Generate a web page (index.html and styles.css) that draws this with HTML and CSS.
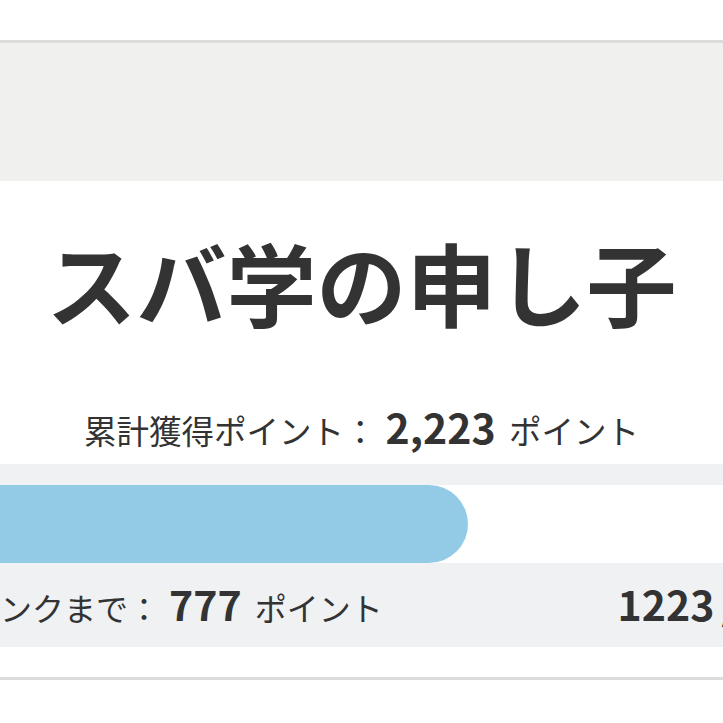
FILE: index.html
```html
<!DOCTYPE html>
<html lang="ja">
<head>
<meta charset="utf-8">
<link rel="stylesheet" href="styles.css">
</head>
<body>
<div class="top-space"></div>
<section class="panel">
  <div class="panel-head"></div>
  <div class="panel-body">
    <h1 class="rank-title">スバ学の申し子</h1>
    <p class="total">累計獲得ポイント：<span class="num">2,223</span> ポイント</p>
    <div class="progress-area">
      <div class="track">
        <div class="bar" style="width: 508px"></div>
      </div>
      <div class="progress-row">
        <p class="next">次のランクまで：<span class="num">777</span> ポイント</p>
        <p class="ratio"><span class="num">1223</span> / <span class="num">2000</span></p>
      </div>
    </div>
  </div>
</section>
</body>
</html>
```

FILE: styles.css
```css
html, body {
  margin: 0;
  padding: 0;
  background: #ffffff;
  overflow: hidden;
}
body {
  font-family: "Noto Sans CJK JP", "Noto Sans", sans-serif;
  color: #333333;
  width: 723px;
}
.top-space {
  height: 40px;
}
.panel {
  border-top: 3px solid #dcdcdc;
  border-bottom: 3px solid #dcdcdc;
}
.panel-head {
  height: 138px;
  background: #f0f0ee;
}
.panel-body {
  padding-top: 34px;
  padding-bottom: 30px;
  background: #ffffff;
}
.rank-title {
  margin: 0;
  font-size: 90px;
  line-height: 132px;
  font-weight: 700;
  text-align: center;
}
.total {
  margin: 59px 0 0;
  font-size: 32.5px;
  line-height: 48px;
  text-align: center;
  white-space: nowrap;
}
.num {
  font-size: 41px;
  line-height: 1;
  font-weight: 700;
  margin: 0 6px 0 9px;
}
.progress-area {
  margin-top: 10px;
  background: #eff1f3;
  padding-top: 21px;
  padding-bottom: 16px;
}
.track {
  margin-left: -40px;
  height: 78px;
  background: #ffffff;
}
.bar {
  height: 78px;
  border-radius: 39px;
  background: #93cbe7;
}
.progress-row {
  display: flex;
  justify-content: space-between;
  margin: 20px -115px 0 -96px;
  white-space: nowrap;
}
.progress-row p {
  margin: 0;
  font-size: 32px;
  line-height: 48px;
}
.progress-row .num {
  font-size: 41px;
}
.ratio .num {
  margin: 0;
}
```
